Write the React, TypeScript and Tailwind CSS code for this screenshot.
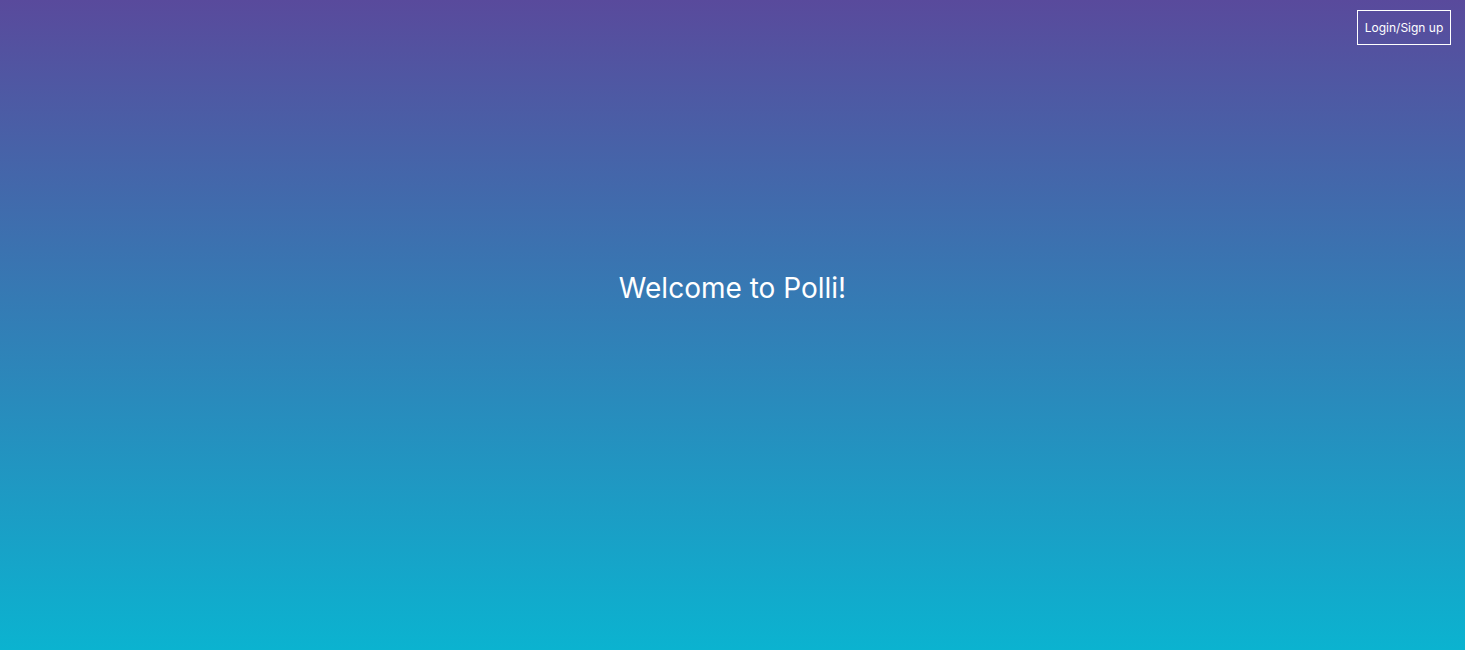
import React from "react";

export default function App() {
  return (
    <div
      className="h-[650px] w-full bg-[linear-gradient(to_bottom,#594a9c,#0bb3d0)] text-white"
      style={{ fontFamily: "Inter, 'Noto Sans', sans-serif" }}
    >
      <div className="flex justify-end pt-[10px] pr-[14px]">
        <button className="h-[35px] w-[94px] border border-white text-[12px] text-white">
          Login/Sign up
        </button>
      </div>
      <h1 className="mt-[224px] text-center text-[28px] leading-[38px] font-normal">
        Welcome to Polli!
      </h1>
    </div>
  );
}
